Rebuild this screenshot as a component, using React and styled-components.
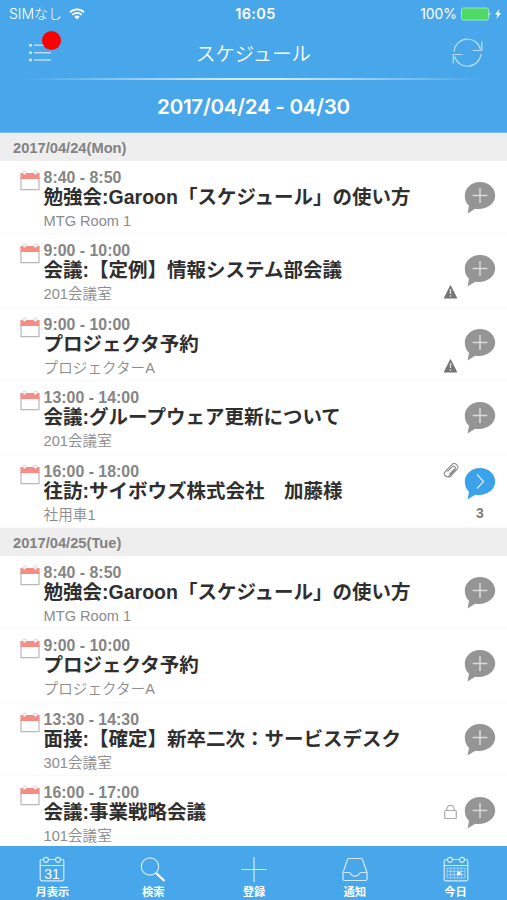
import styled, { createGlobalStyle } from "styled-components";

const GlobalStyle = createGlobalStyle`
  * {
    box-sizing: border-box;
  }
  body {
    margin: 0;
    background-color: white;
    font-family: "Liberation Sans", "Noto Sans CJK JP", sans-serif;
  }
  svg {
    display: block;
    flex-shrink: 0;
  }
`;

const Screen = styled.div`
  width: 507px;
  height: 900px;
  display: flex;
  flex-direction: column;
  overflow: hidden;
`;

const Header = styled.header`
  height: 133px;
  flex-shrink: 0;
  background-color: #48a7ea;
  color: white;
  border-bottom: 1px solid #7fc1f0;
`;

const StatusBar = styled.div`
  height: 27px;
  display: grid;
  grid-template-columns: 1fr auto 1fr;
  align-items: center;
  padding: 1px 5px 0 9px;
  font-family: Inter, "Noto Sans CJK JP", sans-serif;
  font-size: 14.5px;
  line-height: 26px;
`;

const Carrier = styled.div`
  display: flex;
  align-items: center;
  gap: 7px;
  font-size: 14px;
  font-weight: 300;
`;

const Clock = styled.div`
  font-weight: 600;
  letter-spacing: 0.4px;
`;

const Battery = styled.div`
  display: flex;
  align-items: center;
  justify-content: flex-end;
  gap: 4px;
  font-size: 13.9px;
`;

const TitleBar = styled.div`
  height: 51px;
  display: grid;
  grid-template-columns: 80px 1fr 80px;
  align-items: center;
`;

const MenuButton = styled.div`
  position: relative;
  padding-left: 29px;
`;

const Dot = styled.span`
  position: absolute;
  left: 42px;
  top: -12px;
  width: 19px;
  height: 19px;
  border-radius: 50%;
  background-color: #ff0000;
`;

const RefreshButton = styled.div`
  display: flex;
  justify-content: flex-end;
  padding-right: 24px;
`;

const PageTitle = styled.h1`
  margin: 0;
  text-align: center;
  font-family: "Noto Sans CJK JP", sans-serif;
  font-size: 19.4px;
  font-weight: 350;
  line-height: 26px;
`;

const Divider = styled.div`
  height: 2px;
  margin: 0 24px;
  background: linear-gradient(to right, transparent, #d6ecfb 45%, #d6ecfb 55%, transparent);
`;

const DateRange = styled.div`
  height: 52px;
  text-align: center;
  font-family: Inter, sans-serif;
  font-size: 20.6px;
  font-weight: 600;
  letter-spacing: -0.28px;
  line-height: 53px;
`;

const Content = styled.main`
  flex: 1;
  min-height: 0;
  overflow: hidden;
`;

const DayHeading = styled.h2`
  margin: 0;
  height: 28px;
  padding-left: 13px;
  background-color: #eeeeee;
  color: #828282;
  font-size: 14.7px;
  font-weight: 700;
  line-height: 30px;
`;

const Row = styled.div`
  height: 73.4px;
  display: flex;
  padding: 8px 11px 0 20px;
  border-bottom: 1px solid #f9f9f9;
`;

const CalendarBox = styled.div`
  padding-top: 1px;
`;

const Details = styled.div`
  flex: 1;
  margin-left: 3.6px;
  white-space: nowrap;
`;

const Time = styled.div`
  color: #858585;
  font-size: 15.9px;
  font-weight: 700;
  line-height: 17px;
`;

const EventTitle = styled.div`
  color: #2f2f2f;
  font-size: 19.5px;
  font-weight: 700;
  line-height: 23px;
`;

const Place = styled.div`
  color: #8c8c8c;
  font-size: 14.6px;
  font-weight: 350;
  line-height: 25px;
`;

const Mark = styled.div`
  display: flex;
  flex-direction: column;
  width: 15px;
  height: 57px;
  justify-content: ${(props) => props.$place || "center"};
  padding-bottom: ${(props) => (props.$place ? 0 : 1)}px;
  margin-right: 6px;
`;

const Comment = styled.div`
  width: 32px;
  padding-top: ${(props) => (props.$count ? 4 : 12)}px;
  color: #7d7d7d;
  font-size: 14px;
  font-weight: 700;
  line-height: 16px;
  text-align: center;
  & > svg {
    margin-bottom: 5px;
  }
`;

const TabBar = styled.nav`
  height: 54px;
  flex-shrink: 0;
  display: grid;
  grid-template-columns: repeat(5, 100.8px);
  justify-content: center;
  padding-left: 1px;
  background-color: #48a7ea;
  color: white;
`;

const Tab = styled.div`
  display: flex;
  flex-direction: column;
  align-items: center;
  padding-top: 10px;
  font-family: "Noto Sans CJK JP", sans-serif;
  font-size: 11.3px;
  font-weight: 700;
  line-height: 16px;
  gap: 1px;
`;

const days = [
  {
    label: "2017/04/24(Mon)",
    events: [
      { time: "8:40 - 8:50", title: "勉強会:Garoon「スケジュール」の使い方", place: "MTG Room 1" },
      { time: "9:00 - 10:00", title: "会議:【定例】情報システム部会議", place: "201会議室", mark: "warning" },
      { time: "9:00 - 10:00", title: "プロジェクタ予約", place: "プロジェクターA", mark: "warning" },
      { time: "13:00 - 14:00", title: "会議:グループウェア更新について", place: "201会議室" },
      { time: "16:00 - 18:00", title: "往訪:サイボウズ株式会社　加藤様", place: "社用車1", mark: "clip", comments: 3 },
    ],
  },
  {
    label: "2017/04/25(Tue)",
    events: [
      { time: "8:40 - 8:50", title: "勉強会:Garoon「スケジュール」の使い方", place: "MTG Room 1" },
      { time: "9:00 - 10:00", title: "プロジェクタ予約", place: "プロジェクターA" },
      { time: "13:30 - 14:30", title: "面接:【確定】新卒二次：サービスデスク", place: "301会議室" },
      { time: "16:00 - 17:00", title: "会議:事業戦略会議", place: "101会議室", mark: "lock" },
    ],
  },
];

const tabs = [
  { icon: "month", label: "月表示" },
  { icon: "search", label: "検索" },
  { icon: "plus", label: "登録" },
  { icon: "inbox", label: "通知" },
  { icon: "today", label: "今日" },
];

function WifiIcon() {
  return (
    <svg width="16" height="12" viewBox="0 0 16 12" fill="none" stroke="white" strokeWidth="1.9">
      <path d="M1 4.2a10 10 0 0 1 14 0M3.4 6.8a6.5 6.5 0 0 1 9.2 0" />
      <path d="M5.3 8.8a3.8 3.8 0 0 1 5.4 0L8 11.6z" fill="white" stroke="none" />
    </svg>
  );
}

function BatteryIcon() {
  return (
    <svg width="41" height="14" viewBox="0 0 41 14">
      <rect x="0.5" y="1" width="27" height="12" rx="1.6" fill="#4cd964" stroke="#a5e8c4" strokeWidth="0.9" />
      <path d="M28.7 5v4q1.8-2 0-4z" fill="white" />
      <path d="M38.3 2l-4.2 5.600h2.400L35.400 12l4.800-6h-2.700z" fill="white" />
    </svg>
  );
}

function ListIcon() {
  return (
    <svg width="23" height="20" viewBox="0 0 23 20">
      <path d="M.3 1h2.400v2.400H.3zM.3 8.500h2.400v2.400H.3zM.3 15.800h2.400v2.400H.3z" fill="#e9f5fd" />
      <path d="M5 2.200h17M5 9.700h17M5 17h17" stroke="#b9ddf7" strokeWidth="1.4" />
    </svg>
  );
}

function RefreshIcon() {
  return (
    <svg width="31" height="30" viewBox="0 0 31 30" fill="none" stroke="#b9ddf7" strokeWidth="1.2">
      <path d="M2 13.500A13.500 13.500 0 0 1 28.500 11M29 16A13.500 13.500 0 0 1 2.600 18.500" />
      <path d="M29.800 3.500v9h-9M1.300 25.500v-9h9" />
    </svg>
  );
}

function CalendarIcon() {
  return (
    <svg width="20" height="21" viewBox="0 0 20 21">
      <path d="M1 8v11.600h18V8" fill="white" stroke="#b8b8b8" strokeWidth="1.2" />
      <rect x="0.4" y="3" width="19.2" height="6" fill="#f58d85" />
      <circle cx="4.5" cy="2.8" r="1.7" fill="white" stroke="#cfc4c4" strokeWidth="0.8" />
      <circle cx="15.5" cy="2.8" r="1.7" fill="white" stroke="#cfc4c4" strokeWidth="0.8" />
    </svg>
  );
}

function BubbleIcon({ active }) {
  return (
    <svg width="32" height="33" viewBox="0 0 32 33">
      <path
        d="M16 1C7.500 1 .8 7 .8 14.500c0 5 1.900 8 4.200 10.300L3.600 32.500l7.600-4.800C21 29.500 31.200 23.500 31.200 14.500 31.200 7 24.500 1 16 1z"
        fill={active ? "#3ba1e8" : "#959595"}
      />
      {active ? (
        <path d="M13 7.500l6.500 7-6.500 7" fill="none" stroke="#d5ebfa" strokeWidth="1.3" />
      ) : (
        <path d="M16 7v15M8.500 14.500h15" fill="none" stroke="#d9d9d9" strokeWidth="1.5" />
      )}
    </svg>
  );
}

function MarkIcon({ name }) {
  if (name === "warning") {
    return (
      <svg width="15" height="14" viewBox="0 0 15 14">
        <path d="M7.500 1L13.500 13h-12z" fill="#757575" stroke="#757575" strokeWidth="1.2" strokeLinejoin="round" />
        <path d="M7.500 4v5M7.500 10.300v1.500" stroke="#dddddd" strokeWidth="1.4" />
      </svg>
    );
  }
  if (name === "clip") {
    return (
      <svg width="16" height="16" viewBox="0 0 16 16" fill="none" stroke="#888888" strokeWidth="1.1">
        <path d="M12.300 6.300l-5.700 6.200a2.900 2.900 0 0 1-4.600-3.700l6.600-6.800a3.400 3.400 0 0 1 5.400 4.200l-6 6.600a3.300 3.300 0 0 1-3 1.200M4.300 8.600L9.400 3.600a1.700 1.700 0 0 1 2.400 2.400l-5.400 5.300" />
      </svg>
    );
  }
  if (name === "lock") {
    return (
      <svg width="15" height="16" viewBox="0 0 15 16" fill="none" stroke="#aaaaaa" strokeWidth="1.2">
        <rect x="1.7" y="6.5" width="11.6" height="8" rx="1" />
        <path d="M3.800 6.500V5a3.700 3.700 0 0 1 7.400 0v1.500" />
      </svg>
    );
  }
  return null;
}

function TabIcon({ name }) {
  const line = { fill: "none", stroke: "#d4eafa", strokeWidth: 1.2 };
  if (name === "plus") {
    return (
      <svg width="26" height="26" viewBox="0 0 26 26" {...line}>
        <path d="M13 1v25M.5 13.500h25" />
      </svg>
    );
  }
  if (name === "search") {
    return (
      <svg width="26" height="26" viewBox="0 0 26 26" {...line}>
        <circle cx="10" cy="10.5" r="8.7" />
        <path d="M16 17l8.500 8" stroke="white" strokeWidth="2.2" />
      </svg>
    );
  }
  if (name === "inbox") {
    return (
      <svg width="26" height="26" viewBox="0 0 26 26" {...line}>
        <path d="M5.500 3.500Q5.800 2.500 7 2.500h12q1.200 0 1.500 1L25 16.500v6.500q0 1.500-1.500 1.500h-21Q1 24.500 1 23v-6.500z" />
        <path d="M1 16.500h5.500q1.500 0 2 1c2 3.600 7 3.600 9 0q.5-1 2-1H25" />
      </svg>
    );
  }
  return (
    <svg width="26" height="26" viewBox="0 0 26 26" {...line}>
      <path d="M4.500 3.500H3Q1.200 3.500 1.200 5.300v18q0 1.500 1.500 1.500h20.600q1.500 0 1.500-1.500v-18Q24.800 3.500 23 3.500h-1.500M9.500 3.500h7M1.200 9.500h23.600" />
      <circle cx="7" cy="3.8" r="2.5" />
      <circle cx="19" cy="3.8" r="2.5" />
      {name === "month" ? (
        <text
          x="13"
          y="22.5"
          textAnchor="middle"
          fontFamily="Liberation Sans"
          fontSize="14"
          fontWeight="400"
          fill="white"
          stroke="none"
        >
          31
        </text>
      ) : (
        <>
          <path
            d="M4 12h18v10H4zM4 15.300h18M4 18.700h18M7.600 12v10M11.200 12v10M14.800 12v10M18.400 12v10"
            strokeWidth="0.6"
          />
          <rect x="14" y="15.7" width="3.5" height="3.5" fill="white" stroke="none" />
        </>
      )}
    </svg>
  );
}

function EventRow({ event }) {
  const places = { warning: "flex-end", clip: "flex-start" };

  return (
    <Row>
      <CalendarBox>
        <CalendarIcon />
      </CalendarBox>
      <Details>
        <Time>{event.time}</Time>
        <EventTitle>{event.title}</EventTitle>
        <Place>{event.place}</Place>
      </Details>
      <Mark $place={places[event.mark]}>
        <MarkIcon name={event.mark} />
      </Mark>
      <Comment $count={event.comments}>
        <BubbleIcon active={event.comments} />
        {event.comments}
      </Comment>
    </Row>
  );
}

export default function App() {
  return (
    <Screen>
      <GlobalStyle />
      <Header>
        <StatusBar>
          <Carrier>
            SIMなし
            <WifiIcon />
          </Carrier>
          <Clock>16:05</Clock>
          <Battery>
            100%
            <BatteryIcon />
          </Battery>
        </StatusBar>
        <TitleBar>
          <MenuButton>
            <ListIcon />
            <Dot />
          </MenuButton>
          <PageTitle>スケジュール</PageTitle>
          <RefreshButton>
            <RefreshIcon />
          </RefreshButton>
        </TitleBar>
        <Divider />
        <DateRange>2017/04/24 - 04/30</DateRange>
      </Header>

      <Content>
        {days.map((day) => (
          <section key={day.label}>
            <DayHeading>{day.label}</DayHeading>
            {day.events.map((event) => (
              <EventRow key={event.time + event.title} event={event} />
            ))}
          </section>
        ))}
      </Content>

      <TabBar>
        {tabs.map((tab) => (
          <Tab key={tab.icon}>
            <TabIcon name={tab.icon} />
            {tab.label}
          </Tab>
        ))}
      </TabBar>
    </Screen>
  );
}
